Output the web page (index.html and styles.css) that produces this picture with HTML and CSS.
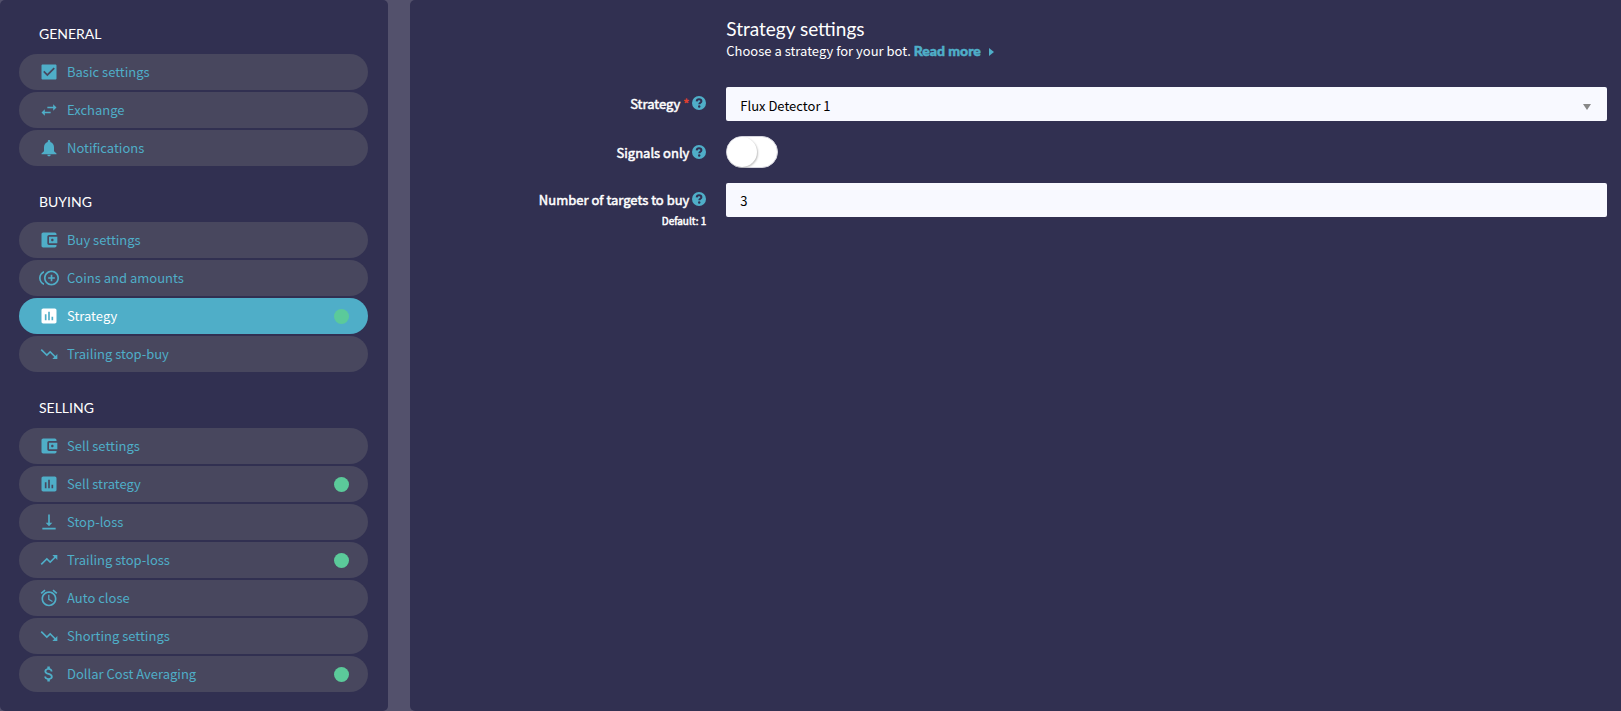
FILE: index.html
```html
<!DOCTYPE html>
<html lang="en">
<head>
    <meta charset="UTF-8">
    <meta name="viewport" content="width=device-width, initial-scale=1.0">
    <title>Strategy settings</title>
    <link rel="stylesheet" href="styles.css">
</head>
<body>

<svg class="sprite" aria-hidden="true">
    <symbol id="i-check" viewBox="0 0 24 24"><path d="M19.5 3h-15C3.7 3 3 3.5 3 4.2v15.6c0 .7.7 1.2 1.5 1.2h15c.8 0 1.5-.5 1.5-1.2V4.2c0-.7-.7-1.2-1.5-1.2zM10 17l-5-5 1.41-1.41L10 14.17l7.59-7.59L19 8l-9 9z"/></symbol>
    <symbol id="i-swap" viewBox="0 0 24 24"><path d="M6.99 11L3 15l3.99 4v-3H14v-2H6.99v-3zM21 9l-3.99-4v3H10v2h7.01v3L21 9z"/></symbol>
    <symbol id="i-bell" viewBox="0 0 24 24"><path d="M12 22c1.1 0 2-.9 2-2h-4c0 1.1.9 2 2 2zm6-6v-5c0-3.07-1.63-5.64-4.5-6.32V4c0-.83-.67-1.5-1.5-1.5s-1.5.67-1.5 1.5v.68C7.64 5.36 6 7.92 6 11v5l-3 2.5V19.5h18V18.5z"/></symbol>
    <symbol id="i-wallet" viewBox="0 0 24 24"><path d="M21 18v1c0 1.1-.9 2-2 2H5c-1.11 0-2-.9-2-2V5c0-1.1.89-2 2-2h14c1.1 0 2 .9 2 2v1h-9c-1.11 0-2 .9-2 2v8c0 1.1.89 2 2 2h9zm-9-2h10V8H12v8zm4-2.5c-.83 0-1.5-.67-1.5-1.5s.67-1.5 1.5-1.5 1.5.67 1.5 1.5-.67 1.5-1.5 1.5z"/></symbol>
    <symbol id="i-coins" viewBox="0 0 24 24"><path d="M16 8h-2v3h-3v2h3v3h2v-3h3v-2h-3zM2 12c0-2.79 1.64-5.2 4.01-6.32V3.52C2.52 4.76 0 8.09 0 12s2.52 7.24 6.01 8.48v-2.16C3.64 17.2 2 14.79 2 12zm13-9c-4.96 0-9 4.04-9 9s4.04 9 9 9 9-4.04 9-9-4.04-9-9-9zm0 16c-3.86 0-7-3.14-7-7s3.14-7 7-7 7 3.14 7 7-3.14 7-7 7z"/></symbol>
    <symbol id="i-chart" viewBox="0 0 24 24"><path d="M19 3H5c-1.1 0-2 .9-2 2v14c0 1.1.9 2 2 2h14c1.1 0 2-.9 2-2V5c0-1.1-.9-2-2-2zM9 17H7v-7h2v7zm4 0h-2V7h2v10zm4 0h-2v-4h2v4z"/></symbol>
    <symbol id="i-down" viewBox="0 0 24 24"><path d="M16 18l2.29-2.29-4.88-4.88-4 4L2 7.41 3.41 6l6 6 4-4 6.3 6.29L22 12v6z"/></symbol>
    <symbol id="i-up" viewBox="0 0 24 24"><path d="M16 6l2.29 2.29-4.88 4.88-4-4L2 16.59 3.41 18l6-6 4 4 6.3-6.29L22 12V6z"/></symbol>
    <symbol id="i-bottom" viewBox="0 0 24 24"><path d="M16 13h-3V3h-2v10H8l4 4 4-4zM4 19v2h16v-2H4z"/></symbol>
    <symbol id="i-alarm" viewBox="0 0 24 24"><path d="M22 5.72l-4.6-3.86-1.29 1.53 4.6 3.86L22 5.72zM7.88 3.39L6.6 1.86 2 5.71l1.29 1.53 4.59-3.85zM12.5 8H11v6l4.75 2.85.75-1.23-4-2.37V8zM12 4c-4.97 0-9 4.03-9 9s4.02 9 9 9c4.97 0 9-4.03 9-9s-4.03-9-9-9zm0 16c-3.87 0-7-3.13-7-7s3.13-7 7-7 7 3.13 7 7-3.13 7-7 7z"/></symbol>
    <symbol id="i-dollar" viewBox="0 0 24 24"><path d="M11.8 10.9c-2.27-.59-3-1.2-3-2.15 0-1.09 1.01-1.85 2.7-1.85 1.78 0 2.44.85 2.5 2.1h2.21c-.07-1.72-1.12-3.3-3.21-3.81V3h-3v2.16c-1.94.42-3.5 1.68-3.5 3.61 0 2.31 1.91 3.46 4.7 4.13 2.5.6 3 1.48 3 2.41 0 .69-.49 1.79-2.7 1.79-2.06 0-2.87-.92-2.98-2.1h-2.2c.12 2.19 1.76 3.42 3.68 3.83V21h3v-2.15c1.95-.37 3.5-1.5 3.5-3.55 0-2.84-2.43-3.81-4.7-4.4z"/></symbol>
    <symbol id="i-help" viewBox="0 0 14 14">
        <circle cx="7" cy="7" r="7"/>
        <path class="mark" d="M4.7 5.4C4.8 4 5.7 3.3 7 3.3c1.4 0 2.4.8 2.4 1.9 0 1.5-2.1 1.5-2.1 3"/>
        <circle class="mark-dot" cx="7.2" cy="10.5" r="1.2"/>
    </symbol>
</svg>

<div class="layout">
    <nav class="sidebar">
        <h2>GENERAL</h2>
        <ul>
            <li><a href="#basic"><svg class="icon"><use href="#i-check"/></svg>Basic settings</a></li>
            <li><a href="#exchange"><svg class="icon"><use href="#i-swap"/></svg>Exchange</a></li>
            <li><a href="#notifications"><svg class="icon"><use href="#i-bell"/></svg>Notifications</a></li>
        </ul>
        <h2>BUYING</h2>
        <ul>
            <li><a href="#buy"><svg class="icon"><use href="#i-wallet"/></svg>Buy settings</a></li>
            <li><a href="#coins"><svg class="icon"><use href="#i-coins"/></svg>Coins and amounts</a></li>
            <li><a href="#strategy" class="active"><svg class="icon"><use href="#i-chart"/></svg>Strategy<span class="dot"></span></a></li>
            <li><a href="#trailing-buy"><svg class="icon"><use href="#i-down"/></svg>Trailing stop-buy</a></li>
        </ul>
        <h2>SELLING</h2>
        <ul>
            <li><a href="#sell"><svg class="icon"><use href="#i-wallet"/></svg>Sell settings</a></li>
            <li><a href="#sell-strategy"><svg class="icon"><use href="#i-chart"/></svg>Sell strategy<span class="dot"></span></a></li>
            <li><a href="#stop-loss"><svg class="icon"><use href="#i-bottom"/></svg>Stop-loss</a></li>
            <li><a href="#trailing-loss"><svg class="icon"><use href="#i-up"/></svg>Trailing stop-loss<span class="dot"></span></a></li>
            <li><a href="#auto-close"><svg class="icon"><use href="#i-alarm"/></svg>Auto close</a></li>
            <li><a href="#shorting"><svg class="icon"><use href="#i-down"/></svg>Shorting settings</a></li>
            <li><a href="#dca"><svg class="icon"><use href="#i-dollar"/></svg>Dollar Cost Averaging<span class="dot"></span></a></li>
        </ul>
    </nav>

    <main class="content">
        <form>
            <div class="row intro">
                <div class="field">
                    <h1>Strategy settings</h1>
                    <p>Choose a strategy for your bot. <a class="more" href="#more">Read more</a></p>
                </div>
            </div>
            <div class="row">
                <label for="strategy">Strategy <span class="required">*</span> <svg class="help"><use href="#i-help"/></svg></label>
                <div class="field">
                    <div class="select">
                        <select id="strategy">
                            <option>Flux Detector 1</option>
                        </select>
                    </div>
                </div>
            </div>
            <div class="row">
                <label for="signals">Signals only <svg class="help"><use href="#i-help"/></svg></label>
                <div class="field">
                    <input class="toggle" type="checkbox" id="signals">
                </div>
            </div>
            <div class="row">
                <label for="targets">Number of targets to buy <svg class="help"><use href="#i-help"/></svg>
                    <small>Default: 1</small>
                </label>
                <div class="field">
                    <input class="text" type="text" id="targets" value="3">
                </div>
            </div>
        </form>
    </main>
</div>

</body>
</html>
```

FILE: styles.css
```css
* {
  box-sizing: border-box;
  margin: 0;
  padding: 0;
}

body {
  background: #53516c;
  color: #fff;
  font-family: "Noto Sans CJK SC", "Open Sans", sans-serif;
  font-size: 13px;
  line-height: 20px;
}

a {
  color: #4faec8;
  text-decoration: none;
}

.sprite {
  display: none;
}

.layout {
  display: flex;
  gap: 22px;
  min-height: 100vh;
}

/* Sidebar */
.sidebar {
  flex: 0 0 calc(24% - 1px);
  padding: 24px 20px 19px 19px;
  background: #313051;
  border-radius: 5px;
}

.sidebar h2 {
  margin-bottom: 10px;
  padding-left: 20px;
  font-family: Lato, sans-serif;
  font-size: 14px;
  font-weight: 400;
}

.sidebar ul {
  display: flex;
  flex-direction: column;
  gap: 2px;
  list-style: none;
}

.sidebar ul + h2 {
  margin-top: 26px;
}

.sidebar li a {
  display: flex;
  align-items: center;
  gap: 8px;
  height: 36px;
  padding: 0 19px 0 20px;
  background: #48475e;
  border-radius: 18px;
}

.sidebar li a.active {
  background: #4faec8;
  color: #fff;
}

.icon {
  width: 20px;
  height: 20px;
  fill: currentColor;
}

.dot {
  width: 15px;
  height: 15px;
  margin-left: auto;
  background: #5bca9a;
  border-radius: 50%;
}

/* Form */
.content {
  flex: 1;
  min-width: 0;
  padding: 18px 4px 18px 6px;
  background: #313051;
  border-radius: 5px 0 0 5px;
}

.row {
  display: grid;
  grid-template-columns: 1fr 3fr;
  margin-bottom: 15px;
}

.intro {
  margin-bottom: 25px;
}

.field {
  grid-column: 2;
  padding: 0 10px;
}

.content h1 {
  font-family: Lato, sans-serif;
  font-size: 19px;
  font-weight: 400;
  line-height: 22px;
}

.content p {
  line-height: 22px;
}

.more {
  font-family: Lato, sans-serif;
  font-size: 14px;
  font-weight: 900;
  -webkit-text-stroke: 0.5px currentColor;
}

.more::after {
  content: "";
  display: inline-block;
  margin-left: 8px;
  border: 4px solid transparent;
  border-left: 5px solid #4faec8;
  border-right: 0;
}

label {
  padding: 7px 10px 0 0;
  text-align: right;
  -webkit-text-stroke: 0.5px currentColor;
}

label small {
  display: block;
  font-size: 10px;
  line-height: 22px;
}

.required {
  color: #e0402f;
}

.help {
  width: 14px;
  height: 14px;
  vertical-align: -1px;
  fill: #4faec8;
}

.mark {
  fill: none;
  stroke: #313051;
  stroke-width: 2;
}

.mark-dot {
  fill: #313051;
}

.select {
  position: relative;
}

.select::after {
  content: "";
  position: absolute;
  top: 17px;
  right: 16px;
  border: 4px solid transparent;
  border-top: 6px solid #888;
  border-bottom: 0;
  pointer-events: none;
}

.select select,
.text {
  display: block;
  width: 100%;
  height: 34px;
  padding: 0 14px;
  appearance: none;
  background: #f8f9ff;
  border: 0;
  border-radius: 2px;
  color: #000;
  font: inherit;
}

.select select {
  padding-top: 4px;
}

.toggle {
  display: block;
  width: 52px;
  height: 32px;
  appearance: none;
  background: #fff;
  border: 1px solid #d5d5de;
  border-radius: 16px;
  cursor: pointer;
}

.toggle::before {
  content: "";
  display: block;
  width: 30px;
  height: 30px;
  background: #fff;
  border-radius: 50%;
  box-shadow: 1px 1px 2px rgba(0, 0, 0, 0.25);
}

.toggle:checked::before {
  margin-left: 20px;
}
```
